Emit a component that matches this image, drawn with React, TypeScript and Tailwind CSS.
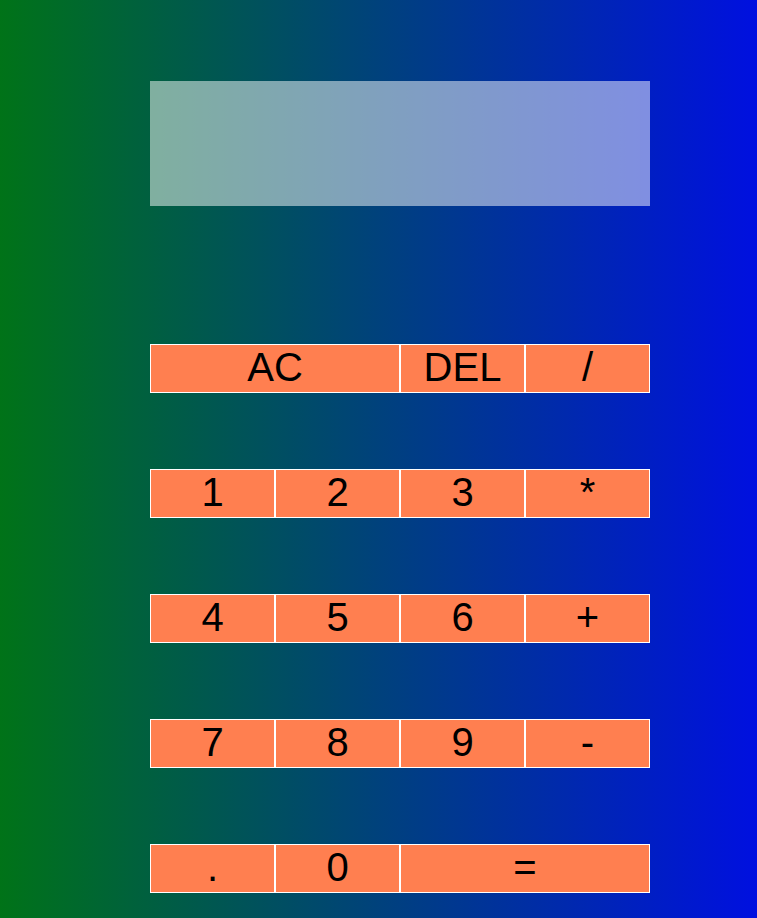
import React from "react"

const rows: { label: string; span?: boolean }[][] = [
  [{ label: "AC", span: true }, { label: "DEL" }, { label: "/" }],
  [{ label: "1" }, { label: "2" }, { label: "3" }, { label: "*" }],
  [{ label: "4" }, { label: "5" }, { label: "6" }, { label: "+" }],
  [{ label: "7" }, { label: "8" }, { label: "9" }, { label: "-" }],
  [{ label: "." }, { label: "0" }, { label: "=", span: true }],
]

const App = () => {
  return (
    <div
      className="min-h-screen w-full flex flex-col items-start pl-[150px] pt-[81px] bg-[linear-gradient(to_right,#007318,#0010e0)]"
      style={{ fontFamily: "'Liberation Sans', Arial, sans-serif" }}
    >
      <div className="w-[500px] h-[125px] bg-white/50"></div>
      <div className="mt-[138px] grid grid-cols-[repeat(4,125px)] gap-y-[76px]">
        {rows.flat().map((btn, i) => (
          <button
            key={i}
            className={`${btn.span ? "col-span-2" : ""} h-[49px] border border-white bg-[#ff7f50] text-black text-[40px] leading-none pb-[4px] flex items-center justify-center`}
          >
            {btn.label}
          </button>
        ))}
      </div>
    </div>
  )
}

export default App
